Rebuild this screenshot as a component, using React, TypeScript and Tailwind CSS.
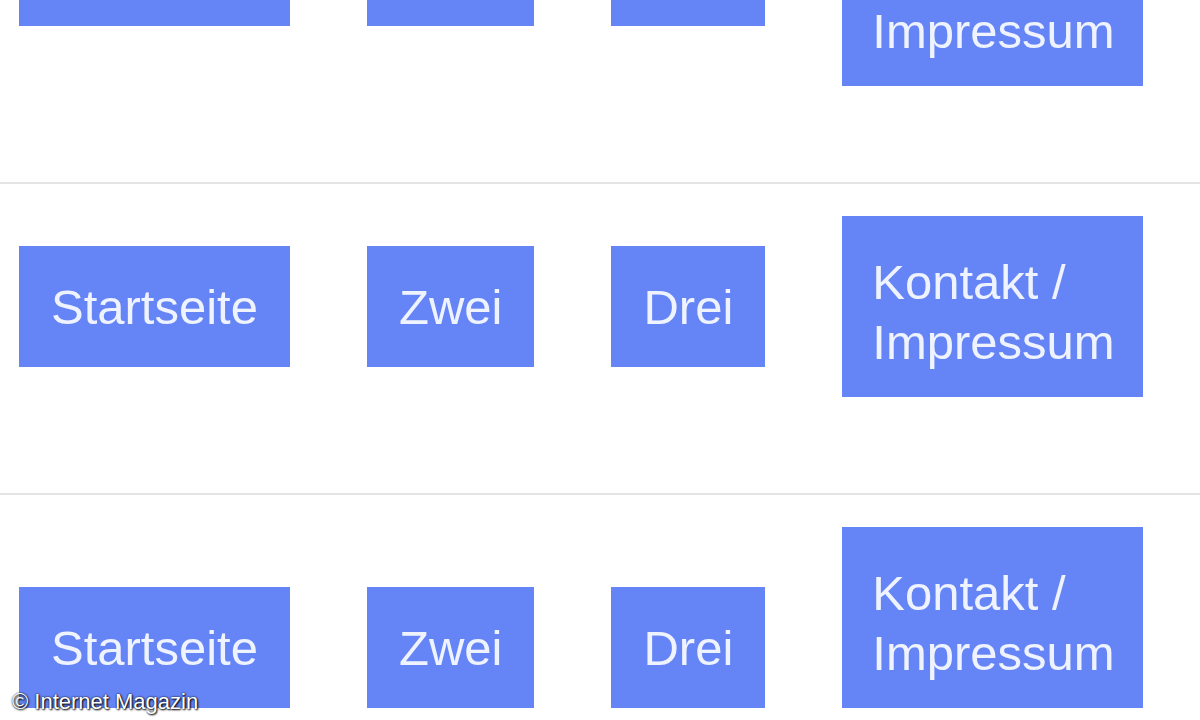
import React from "react";

const items = ["Startseite", "Zwei", "Drei"];

function Row({ align }: { align: string }) {
  return (
    <div className="pt-[32px] pb-[96px] border-b-2 border-[#e3e4e6]">
      <div className={`flex gap-[77px] pl-[19px] ${align}`}>
        {items.map((t) => (
          <div
            key={t}
            className="bg-[#6584f6] text-[#eef3ff] text-[49px] leading-[61px] px-[32px] pt-[31px] pb-[29px]"
          >
            {t}
          </div>
        ))}
        <div className="bg-[#6584f6] text-[#eef3ff] text-[49px] leading-[60px] pl-[30px] pr-[20px] pt-[36px] pb-[25px] w-[301px]">
          Kontakt / Impressum
        </div>
      </div>
    </div>
  );
}

export default function App() {
  return (
    <div
      className="relative w-[1200px] h-[720px] overflow-hidden bg-white"
      style={{ fontFamily: '"Liberation Sans", Arial, sans-serif' }}
    >
      <div className="-mt-[127px]">
        <Row align="items-start" />
        <Row align="items-center" />
        <Row align="items-end" />
      </div>
      <div className="absolute left-[12px] top-[685px] text-[22px] text-white [text-shadow:0_0_2px_#000,1px_1px_2px_#000]">
        © Internet Magazin
      </div>
    </div>
  );
}
